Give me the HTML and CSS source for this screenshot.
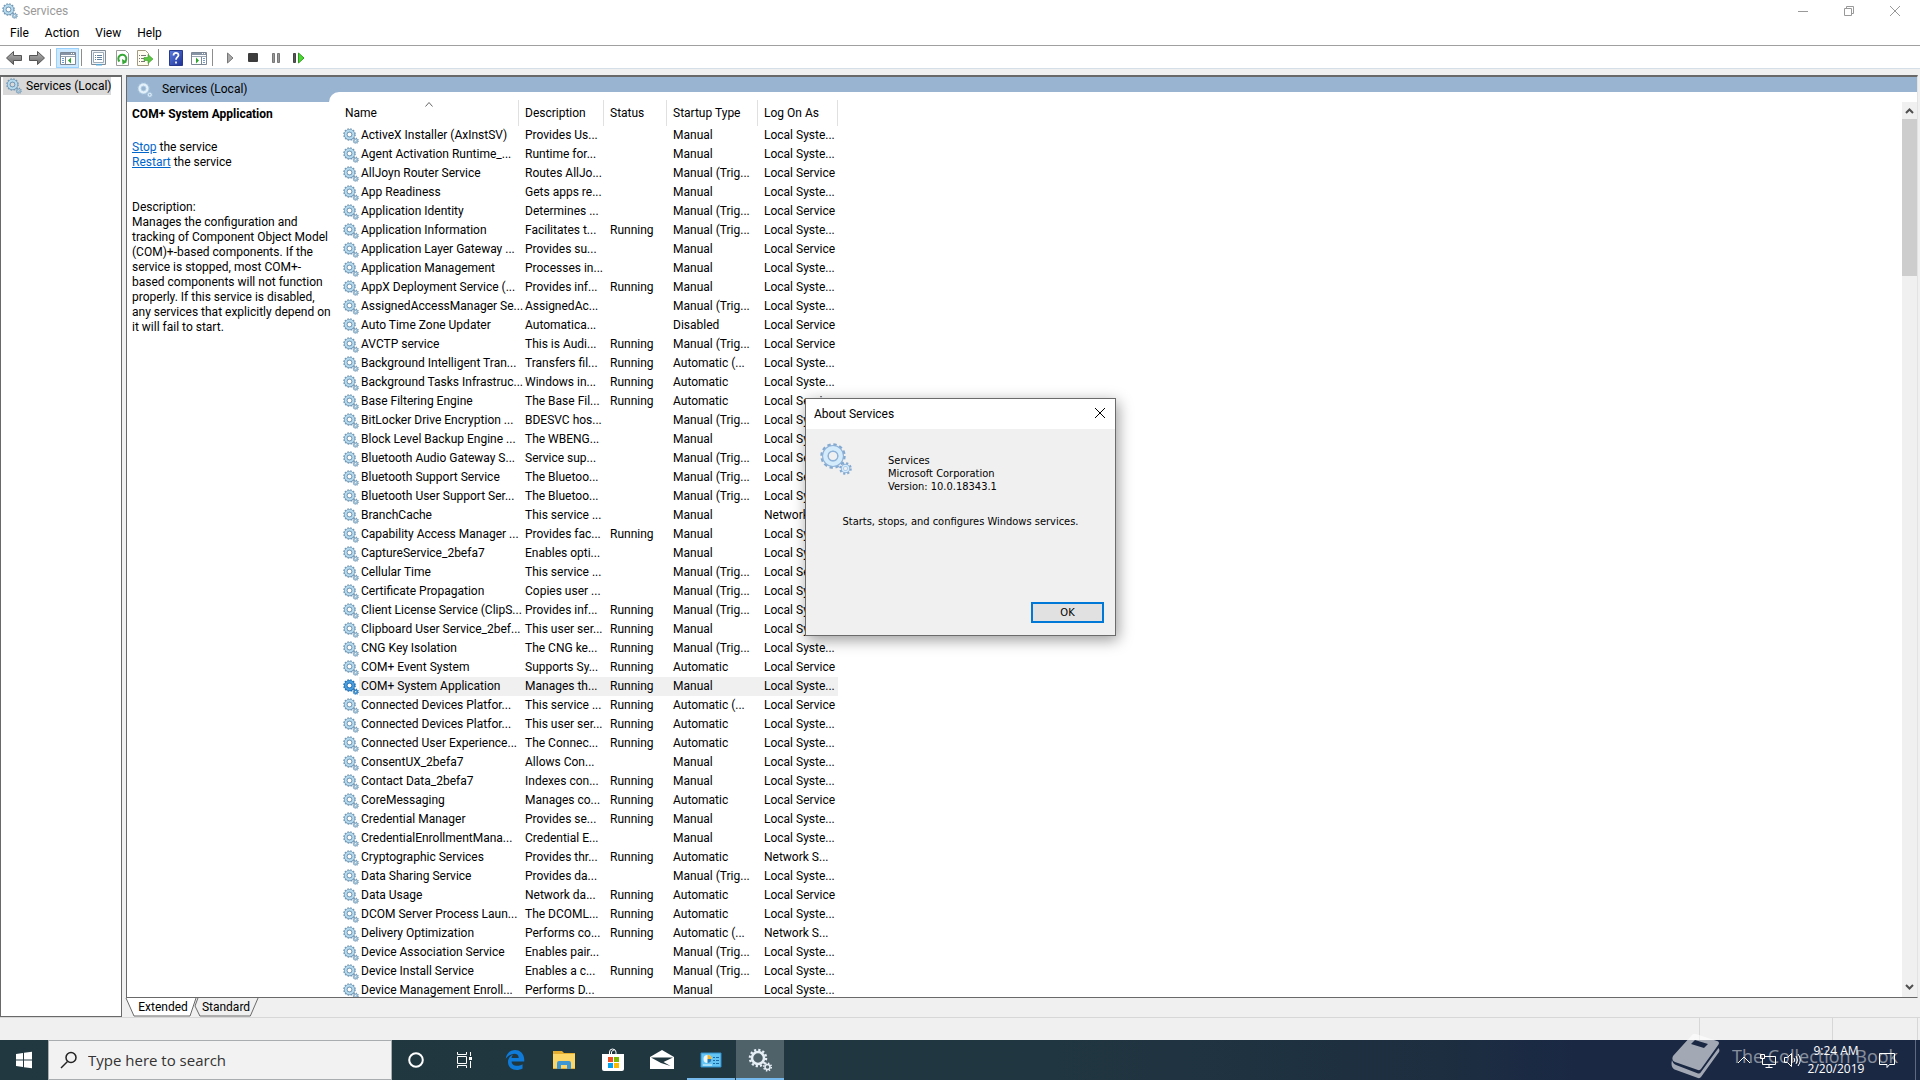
FILE: index.html
```html
<!DOCTYPE html>

<html lang="en">
  <head>
    <meta charset="UTF-8" />
    <meta name="viewport" content="width=device-width,initial-scale=1" />

    <title>Services</title>

    <link rel="stylesheet" href="styles.css">
  </head>

  <body>
    <svg class="sprite" aria-hidden="true">
      <defs>
        <linearGradient id="metal" x1="0" y1="0" x2="0" y2="1">
          <stop offset="0" stop-color="#b4b4b4" />
          <stop offset="1" stop-color="#6a6a6a" />
        </linearGradient>
        <linearGradient id="help-blue" x1="0" y1="0" x2="1" y2="1">
          <stop offset="0" stop-color="#5d7fe0" />
          <stop offset="1" stop-color="#1c2f96" />
        </linearGradient>
      </defs>
      <symbol id="gear" viewBox="0 0 32 32">
        <g fill="none">
          <circle class="gear-teeth" cx="13" cy="13" r="11" stroke-width="3.4" stroke-dasharray="3.2 2.56" />
          <circle class="gear-rim" cx="13" cy="13" r="7.8" stroke-width="6.4" />
          <circle class="gear-body" cx="13" cy="13" r="7.6" stroke-width="4.6" />
          <circle class="gear-edge" cx="13" cy="13" r="4.8" stroke-width="1.4" />
          <circle class="gear-teeth" cx="25.5" cy="25.5" r="5" stroke-width="2.6" stroke-dasharray="2 1.93" />
          <circle class="gear-rim" cx="25.5" cy="25.5" r="3.2" stroke-width="3" />
          <circle class="gear-body" cx="25.5" cy="25.5" r="3" stroke-width="1.6" />
        </g>
      </symbol>
      <symbol id="arrow" viewBox="0 0 16 16">
        <path d="M.5 8 7.500 1.500v4h8v5h-8v4z" fill="url(#metal)" stroke="#555" />
      </symbol>
      <symbol id="window" viewBox="0 0 16 16">
        <path d="M.5 2.500h15v12H.5z" fill="#fff" stroke="#7c8896" />
        <path d="M1 3h14v2H1z" fill="#8794a6" />
        <path d="M1 6.500h14" stroke="#9aa5b3" />
        <path d="M11 3.500h1m1 0h1" stroke="#fff" />
      </symbol>
    </svg>

    <header class="title-bar">
      <svg class="icon gear"><use href="#gear" /></svg>
      <h1>Services</h1>
      <div class="window-controls">
        <button type="button" aria-label="Minimize">
          <svg viewBox="0 0 12 12"><path d="M1 6.500h10" /></svg>
        </button>
        <button type="button" aria-label="Restore">
          <svg viewBox="0 0 12 12"><path d="M1.500 3.500h7v7h-7zM3.500 3.500v-2h7v7h-2" /></svg>
        </button>
        <button type="button" aria-label="Close">
          <svg viewBox="0 0 12 12"><path d="m1 1 10 10M11 1 1 11" /></svg>
        </button>
      </div>
    </header>

    <nav class="menu-bar">
      <button type="button">File</button>
      <button type="button">Action</button>
      <button type="button">View</button>
      <button type="button">Help</button>
    </nav>

    <div class="toolbar">
      <button type="button" aria-label="Back">
        <svg class="icon"><use href="#arrow" /></svg>
      </button>
      <button type="button" aria-label="Forward">
        <svg class="icon flip"><use href="#arrow" /></svg>
      </button>
      <span class="separator"></span>
      <button type="button" class="pressed" aria-label="Show or hide console tree">
        <svg class="icon" viewBox="0 0 16 16">
          <use href="#window" />
          <path d="M5.500 7v7" stroke="#7c8896" />
          <path d="M2 8.500h2m-2 2h2m-2 2h2" stroke="#6f9ccd" />
          <path d="M11 7.500v6l-3-3z" fill="#2fa52f" />
        </svg>
      </button>
      <span class="separator"></span>
      <button type="button" aria-label="Properties">
        <svg class="icon" viewBox="0 0 16 16">
          <path d="M.5.5h14v14H.5z" fill="#eef3f8" stroke="#808b97" />
          <path d="M2.500 2.500h10v10h-10z" fill="#fff" stroke="#9eabb9" />
          <path d="M4 5.500h1m1 0h5m-7 2h1m1 0h5m-7 2h1m1 0h5" stroke="#5f7f9f" />
          <path d="M5 14h6v1.500H5z" fill="#5aa7d6" />
        </svg>
      </button>
      <button type="button" aria-label="Refresh">
        <svg class="icon" viewBox="0 0 16 16">
          <path d="M2.500.5h9l3 3v12h-12z" fill="#fff" stroke="#9a9a9a" />
          <path d="M5.500 11.500a4 4 0 1 1 5 .5" fill="none" stroke="#37a737" stroke-width="2" />
          <path d="m8 9 .5 5.500L13 12z" fill="#37a737" />
        </svg>
      </button>
      <button type="button" aria-label="Export list">
        <svg class="icon" viewBox="0 0 16 16">
          <path d="M.5.5h8l3 3v12H.5z" fill="#fffdf0" stroke="#a29b82" />
          <path d="M2 5.500h1m1 0h5m-7 3h1m1 0h3m-5 3h1m1 0h4" stroke="#777" />
          <path d="M7 7.500h4v-3l5 4.500-5 4.500v-3H7z" fill="#5cc443" stroke="#3b9a2a" stroke-width=".6" />
        </svg>
      </button>
      <span class="separator"></span>
      <button type="button" aria-label="Help">
        <svg class="icon" viewBox="0 0 16 16">
          <path d="M1.500.5h13v15h-13z" fill="url(#help-blue)" stroke="#27398c" />
          <path d="M5.500 5.500c0-3.500 5-3.300 5-.3 0 2-2.500 2-2.500 4.500M8 11.500v2" fill="none" stroke="#fff" stroke-width="1.700" />
        </svg>
      </button>
      <button type="button" aria-label="Show or hide action pane">
        <svg class="icon" viewBox="0 0 16 16">
          <use href="#window" />
          <path d="M10.500 7v7" stroke="#7c8896" />
          <path d="M12 8.500h2m-2 2h2m-2 2h2" stroke="#6f9ccd" />
          <path d="M5 7.500v6l3-3z" fill="#2fa52f" />
        </svg>
      </button>
      <span class="separator"></span>
      <button type="button" aria-label="Start service">
        <svg class="icon" viewBox="0 0 16 16">
          <path d="M5.500 3v10l5.500-5z" fill="#aaa" stroke="#777" />
        </svg>
      </button>
      <button type="button" aria-label="Stop service">
        <svg class="icon" viewBox="0 0 16 16">
          <rect x="3" y="3" width="10" height="9" rx="1" fill="#3c3c3c" />
        </svg>
      </button>
      <button type="button" aria-label="Pause service">
        <svg class="icon" viewBox="0 0 16 16">
          <path d="M4.500 3.500h2v9h-2zM9.500 3.500h2v9h-2z" fill="#999" stroke="#777" />
        </svg>
      </button>
      <button type="button" aria-label="Restart service">
        <svg class="icon" viewBox="0 0 16 16">
          <path d="M2.500 3.500h2v9h-2z" fill="#555" stroke="#444" />
          <path d="M7.500 3v10l5.500-5z" fill="#4fd835" stroke="#2f9d1e" />
        </svg>
      </button>
    </div>

    <main>
      <aside class="tree">
        <a class="tree-item" href="#services">
          <svg class="icon gear"><use href="#gear" /></svg>
          Services (Local)
        </a>
      </aside>

      <div class="content">
        <section id="services" class="view">
          <div class="details">
            <h2 class="details-title">
              <svg class="icon gear light"><use href="#gear" /></svg>
              Services (Local)
            </h2>
            <div class="details-body">
              <h3>COM+ System Application</h3>
              <p class="actions">
                <a href="#stop">Stop</a> the service<br />
                <a href="#restart">Restart</a> the service
              </p>
              <p>
                Description:<br />
                Manages the configuration and<br />
                tracking of Component Object Model<br />
                (COM)+-based components. If the<br />
                service is stopped, most COM+-<br />
                based components will not function<br />
                properly. If this service is disabled,<br />
                any services that explicitly depend on<br />
                it will fail to start.
              </p>
            </div>
          </div>

          <div class="list-area">
            <div class="list">
              <table>
                <colgroup>
                  <col class="col-name" />
                  <col class="col-description" />
                  <col class="col-status" />
                  <col class="col-startup" />
                  <col class="col-logon" />
                </colgroup>
                <thead>
                  <tr>
                    <th class="sorted" scope="col">
                      Name
                      <svg class="sort-mark" viewBox="0 0 8 5"><path d="m.5 4.500 3.500-4 3.500 4" /></svg>
                    </th>
                    <th scope="col">Description</th>
                    <th scope="col">Status</th>
                    <th scope="col">Startup Type</th>
                    <th scope="col">Log On As</th>
                  </tr>
                </thead>
                <tbody id="rows"></tbody>
              </table>
            </div>
            <div class="scrollbar">
              <button type="button" aria-label="Scroll up">
                <svg viewBox="0 0 9 6"><path d="m1 5 3.500-3.500L8 5" /></svg>
              </button>
              <div class="scroll-thumb"></div>
              <button type="button" class="scroll-down" aria-label="Scroll down">
                <svg viewBox="0 0 9 6"><path d="m1 1 3.500 3.500L8 1" /></svg>
              </button>
            </div>
          </div>
        </section>

        <div class="tabs">
          <button type="button" class="tab tab-active">
            <svg viewBox="0 0 70 19" preserveAspectRatio="none"><path d="M0 0 8 18h56L70 0" /></svg>
            <span>Extended</span>
          </button>
          <button type="button" class="tab">
            <svg viewBox="0 0 66 19" preserveAspectRatio="none"><path d="m2 0-3 8 5 10h52l8-18" /></svg>
            <span>Standard</span>
          </button>
        </div>
      </div>
    </main>

    <footer class="status-bar">
      <span class="status-wide"></span>
      <span class="status-cell"></span>
      <span class="status-end"></span>
    </footer>

    <div class="taskbar">
      <button type="button" class="task" aria-label="Start">
        <svg class="task-icon" viewBox="0 0 24 24">
          <path d="m4 6 7-1v6.500H4zM12 4.800 20 3.700v7.800h-8zM4 12.500h7V19l-7-1zM12 12.500h8v7.800l-8-1.100z" fill="#fff" />
        </svg>
      </button>
      <label class="search">
        <svg viewBox="0 0 18 18"><circle cx="11" cy="6.500" r="5" /><path d="M7.500 10.500 1 17" /></svg>
        <input type="text" placeholder="Type here to search" aria-label="Search" />
      </label>
      <button type="button" class="task" aria-label="Cortana">
        <svg class="task-icon" viewBox="0 0 24 24">
          <circle cx="12" cy="12" r="6.800" fill="none" stroke="#fff" stroke-width="2" />
        </svg>
      </button>
      <button type="button" class="task" aria-label="Task View">
        <svg class="task-icon" viewBox="0 0 24 24">
          <g fill="none" stroke="#fff">
            <path d="M5.500 8.500h9v7h-9zM5.500 4v2.500h9V4M5.500 20v-2.500h9V20M18.500 4v4m0 5v7" />
            <path d="M17 10.500h3" stroke-width="3" />
          </g>
        </svg>
      </button>
      <div class="pinned">
        <button type="button" class="task" aria-label="Microsoft Edge">
          <svg class="task-icon" viewBox="0 0 24 24">
            <path d="M2.740 10.810C3.830-1.360 22.500-1.360 21.200 13.560H8.610C8.610 17.850 14.420 19.210 19.540 16.310V20.530C13.250 23.880 5 21.430 5 14.090 5 8.580 9.970 6.810 9.970 6.810S8.580 8.580 8.540 10.050H15.700C15.700 2.930 5.900 5.570 2.740 10.810Z" fill="#0f7ad8" />
          </svg>
        </button>
        <button type="button" class="task" aria-label="File Explorer">
          <svg class="task-icon" viewBox="0 0 24 24">
            <path d="M1 3h9l2 2h11v16H1z" fill="#e6ae31" />
            <path d="M1 6h22v14H1z" fill="#fcd768" />
            <path d="M5 21v-6q0-2 2-2h10q2 0 2 2v6h-4v-4H9v4z" fill="#3e97d3" />
            <path d="M9 17h6v3H9z" fill="#fcd768" />
          </svg>
        </button>
        <button type="button" class="task" aria-label="Microsoft Store">
          <svg class="task-icon" viewBox="0 0 24 24">
            <path d="M8.500 6V4q0-3 3-3t3.500 3v2M10.500 6V4q1-2.500 3-2" fill="none" stroke="#fff" />
            <path d="M1 6h22v15q0 2-2 2H3q-2 0-2-2z" fill="#fff" />
            <path d="M7 9h5v5H7z" fill="#f04e23" />
            <path d="M13 9h5v5h-5z" fill="#7db700" />
            <path d="M7 15h5v5H7z" fill="#00a1ed" />
            <path d="M13 15h5v5h-5z" fill="#fdb800" />
          </svg>
        </button>
        <button type="button" class="task" aria-label="Mail">
          <svg class="task-icon" viewBox="0 0 24 24">
            <path d="M0 9 12 2l12 7v12H0z" fill="#fff" />
            <path d="M1 9.500h22L13.500 14l7 4-9.500-3z" fill="#213840" />
          </svg>
        </button>
        <button type="button" class="task open" aria-label="Control Panel">
          <svg class="task-icon" viewBox="0 0 24 24">
            <path d="M2 5h20v14H2z" fill="#64c5f5" stroke="#318fc9" />
            <circle cx="8.500" cy="11" r="4" fill="#e9f7ff" />
            <path d="M8.500 11V7a4 4 0 0 1 4 4z" fill="#f3b52b" />
            <path d="M8.500 11h4a4 4 0 0 1-4 4z" fill="#257bb8" />
            <path d="M14 9.500h2m1 0h3M14 12.500h2m1 0h3M14 15.500h2m1 0h3" stroke="#1a6aa8" />
            <path d="M4 17h9" stroke="#e9f7ff" />
          </svg>
        </button>
        <button type="button" class="task open current" aria-label="Services">
          <svg class="task-icon" viewBox="0 0 24 24">
            <g fill="none" stroke="#e6eff6">
              <circle cx="10" cy="10" r="6" stroke-width="2.500" />
              <circle cx="10" cy="10" r="8" stroke-width="2.500" stroke-dasharray="2.200 1.990" />
              <circle cx="19.500" cy="19" r="2.500" stroke-width="1.500" />
              <circle cx="19.500" cy="19" r="3.800" stroke-width="1.500" stroke-dasharray="1.500 1.485" />
            </g>
          </svg>
        </button>
      </div>

      <div class="tray">
        <button type="button" aria-label="Show hidden icons">
          <svg viewBox="0 0 18 18"><path d="m3 12 6-6 6 6" /></svg>
        </button>
        <button type="button" aria-label="Network">
          <svg viewBox="0 0 18 18"><path d="M6 5.500h10.500v8H3.500V8M1.500 3.500h4v4h-4zM10 13.500v3M6.500 16.500h7" /></svg>
        </button>
        <button type="button" aria-label="Volume">
          <svg viewBox="0 0 18 18"><path d="M1.500 6.500h3l4-4v13l-4-4h-3zM11 7q1.500 2 0 4M13 5q3 4 0 8M15 3q4.500 6 0 12" /></svg>
        </button>
        <time class="clock" datetime="2019-02-20T09:24">
          <span>9:24 AM</span>
          <span>2/20/2019</span>
        </time>
        <button type="button" class="notifications" aria-label="Notifications">
          <svg viewBox="0 0 18 18"><path d="M1.500 2.500h15v11h-5L9 16.500v-3H1.500z" /></svg>
        </button>
        <span class="show-desktop"></span>
      </div>
    </div>

    <div class="watermark">
      <svg viewBox="0 0 50 46">
        <path fill-rule="evenodd" d="M22 2q1.500-2 4-1l21 7q3 1 1.500 3.500L31 36q-1 1.500-3 1L5 29q-4-2-2-6zM25 7l-4 4 13 4 4-4z" />
        <path d="M2 27q-2 8 4 10l22 8q2 .5 3-1l18-25q1-2-.5-4L31 39q-1 2-3 1.500L6 32q-3-1-4-5z" />
      </svg>
      <span>The Collection Book</span>
    </div>

    <dialog class="about" open aria-labelledby="about-title">
      <div class="about-title-bar">
        <h2 id="about-title">About Services</h2>
        <button type="button" aria-label="Close">
          <svg viewBox="0 0 12 12"><path d="m1 1 10 10M11 1 1 11" /></svg>
        </button>
      </div>
      <div class="about-info">
        <svg class="about-icon gear"><use href="#gear" /></svg>
        <p>
          Services<br />
          Microsoft Corporation<br />
          Version: 10.0.18343.1
        </p>
      </div>
      <p class="about-text">Starts, stops, and configures Windows services.</p>
      <div class="about-actions">
        <button type="button">OK</button>
      </div>
    </dialog>

    <script src="services.js"></script>
  </body>
</html>
```

FILE: services.js
```js
const sys = "Local Syste...";
const local = "Local Service";
const network = "Network S...";
const trig = "Manual (Trig...";
const delayed = "Automatic (...";
const selected = "COM+ System Application";

// name, description, running, startup type, log on as
const services = [
  ["ActiveX Installer (AxInstSV)", "Provides Us...", 0, "Manual", sys],
  ["Agent Activation Runtime_...", "Runtime for...", 0, "Manual", sys],
  ["AllJoyn Router Service", "Routes AllJo...", 0, trig, local],
  ["App Readiness", "Gets apps re...", 0, "Manual", sys],
  ["Application Identity", "Determines ...", 0, trig, local],
  ["Application Information", "Facilitates t...", 1, trig, sys],
  ["Application Layer Gateway ...", "Provides su...", 0, "Manual", local],
  ["Application Management", "Processes in...", 0, "Manual", sys],
  ["AppX Deployment Service (...", "Provides inf...", 1, "Manual", sys],
  ["AssignedAccessManager Se...", "AssignedAc...", 0, trig, sys],
  ["Auto Time Zone Updater", "Automatica...", 0, "Disabled", local],
  ["AVCTP service", "This is Audi...", 1, trig, local],
  ["Background Intelligent Tran...", "Transfers fil...", 1, delayed, sys],
  ["Background Tasks Infrastruc...", "Windows in...", 1, "Automatic", sys],
  ["Base Filtering Engine", "The Base Fil...", 1, "Automatic", local],
  ["BitLocker Drive Encryption ...", "BDESVC hos...", 0, trig, sys],
  ["Block Level Backup Engine ...", "The WBENG...", 0, "Manual", sys],
  ["Bluetooth Audio Gateway S...", "Service sup...", 0, trig, local],
  ["Bluetooth Support Service", "The Bluetoo...", 0, trig, local],
  ["Bluetooth User Support Ser...", "The Bluetoo...", 0, trig, sys],
  ["BranchCache", "This service ...", 0, "Manual", network],
  ["Capability Access Manager ...", "Provides fac...", 1, "Manual", sys],
  ["CaptureService_2befa7", "Enables opti...", 0, "Manual", sys],
  ["Cellular Time", "This service ...", 0, trig, local],
  ["Certificate Propagation", "Copies user ...", 0, trig, sys],
  ["Client License Service (ClipS...", "Provides inf...", 1, trig, sys],
  ["Clipboard User Service_2bef...", "This user ser...", 1, "Manual", sys],
  ["CNG Key Isolation", "The CNG ke...", 1, trig, sys],
  ["COM+ Event System", "Supports Sy...", 1, "Automatic", local],
  ["COM+ System Application", "Manages th...", 1, "Manual", sys],
  ["Connected Devices Platfor...", "This service ...", 1, delayed, local],
  ["Connected Devices Platfor...", "This user ser...", 1, "Automatic", sys],
  ["Connected User Experience...", "The Connec...", 1, "Automatic", sys],
  ["ConsentUX_2befa7", "Allows Con...", 0, "Manual", sys],
  ["Contact Data_2befa7", "Indexes con...", 1, "Manual", sys],
  ["CoreMessaging", "Manages co...", 1, "Automatic", local],
  ["Credential Manager", "Provides se...", 1, "Manual", sys],
  ["CredentialEnrollmentMana...", "Credential E...", 0, "Manual", sys],
  ["Cryptographic Services", "Provides thr...", 1, "Automatic", network],
  ["Data Sharing Service", "Provides da...", 0, trig, sys],
  ["Data Usage", "Network da...", 1, "Automatic", local],
  ["DCOM Server Process Laun...", "The DCOML...", 1, "Automatic", sys],
  ["Delivery Optimization", "Performs co...", 1, delayed, network],
  ["Device Association Service", "Enables pair...", 0, trig, sys],
  ["Device Install Service", "Enables a c...", 1, trig, sys],
  ["Device Management Enroll...", "Performs D...", 0, "Manual", sys],
];

const rows = document.getElementById("rows");
rows.innerHTML = services
  .map(
    ([name, description, running, startup, logon]) => `
      <tr class="${name === selected ? "selected" : ""}">
        <td><div class="name"><svg class="icon gear"><use href="#gear" /></svg>${name}</div></td>
        <td>${description}</td>
        <td>${running ? "Running" : ""}</td>
        <td>${startup}</td>
        <td>${logon}</td>
      </tr>`
  )
  .join("");
```

FILE: styles.css
```css
:root {
  --color-face: #f0f0f0;
  --color-line: #a0a0a0;
  --color-dark: #696969;
  --color-header: #99b4d1;
  --color-link: #0066cc;
  --font-family: Roboto, "Open Sans", sans-serif;
  --font-search: "Open Sans", "Noto Sans", sans-serif;
  --font-dialog: "DejaVu Sans Condensed", "DejaVu Sans", sans-serif;
}

* {
  box-sizing: border-box;
  margin: 0;
  padding: 0;
}

body {
  background-color: var(--color-face);
  color: #000;
  display: flex;
  flex-direction: column;
  font-family: var(--font-family);
  font-size: 12px;
  height: 100vh;
  line-height: 15px;
  overflow: hidden;
}

h1,
h2 {
  font-size: 12px;
  font-weight: normal;
}

h3 {
  font-size: 12px;
}

button {
  background-color: transparent;
  border-style: none;
  color: inherit;
  font-family: inherit;
  font-size: inherit;
  line-height: inherit;
}

.sprite {
  height: 0;
  position: absolute;
  width: 0;
}

.icon {
  display: block;
  flex-shrink: 0;
  height: 16px;
  width: 16px;
}

.flip {
  transform: scaleX(-1);
}

/* gears */
.gear {
  --teeth: #7a9ebb;
  --rim: #6b8fac;
  --body: #b5daee;
}

.light {
  --teeth: #a5c3dc;
  --rim: #b4cfe4;
  --body: #e4f1fa;
}

.gear-teeth {
  stroke: var(--teeth);
}

.gear-rim {
  stroke: var(--rim);
}

.gear-body {
  stroke: var(--body);
}

.gear-edge {
  stroke: var(--rim);
}

/* window frame */
.title-bar {
  align-items: center;
  background-color: #fff;
  color: #999;
  display: flex;
  flex-shrink: 0;
  gap: 5px;
  height: 22px;
  padding-left: 2px;
}

.window-controls {
  display: flex;
  margin-left: auto;
  padding-right: 2px;
}

.window-controls button {
  align-items: center;
  display: flex;
  height: 20px;
  justify-content: center;
  width: 46px;
}

.window-controls svg {
  fill: none;
  height: 12px;
  stroke: #999;
  width: 12px;
}

.menu-bar {
  background-color: #fff;
  border-bottom: 1px solid var(--color-line);
  display: flex;
  flex-shrink: 0;
  gap: 2px;
  height: 24px;
  padding: 0 0 1px 3px;
}

.menu-bar button {
  padding: 0 7px;
}

.toolbar {
  align-items: center;
  background-color: #fff;
  border-bottom: 1px solid #d5dfe8;
  display: flex;
  flex-shrink: 0;
  height: 23px;
  padding: 1px 0 0 2px;
}

.toolbar button {
  align-items: center;
  display: flex;
  height: 20px;
  justify-content: center;
  width: 23px;
}

.toolbar .pressed {
  background-color: #cce8ff;
  border: 1px solid #99d1ff;
}

.separator {
  background-color: #8d8d8d;
  height: 17px;
  margin: 0 5px 0 2px;
  width: 1px;
}

/* panes */
main {
  display: flex;
  flex: 1;
  gap: 4px;
  min-height: 0;
  padding: 6px 2px 0 0;
}

.tree {
  background-color: #fff;
  border: 1px solid var(--color-dark);
  border-top-width: 2px;
  padding: 0 2px;
  width: 122px;
}

.tree-item {
  align-items: center;
  background-color: #d9d9d9;
  color: #000;
  display: flex;
  gap: 4px;
  height: 18px;
  padding-left: 3px;
  text-decoration: none;
  white-space: nowrap;
  width: 108px;
}

.content {
  display: flex;
  flex: 1;
  flex-direction: column;
  min-width: 0;
}

.view {
  background-color: #fff;
  border: 1px solid var(--color-dark);
  border-right-color: #e3e3e3;
  border-top-width: 2px;
  display: flex;
  flex: 1;
  min-height: 0;
}

.details {
  position: relative;
  width: 202px;
  z-index: 1;
}

.details-title {
  align-items: center;
  background-color: var(--color-header);
  display: flex;
  gap: 9px;
  height: 25px;
  padding-left: 10px;
}

.details-body {
  padding: 5px 0 0 5px;
  white-space: nowrap;
}

.actions {
  padding: 18px 0 30px;
}

.actions a {
  color: var(--color-link);
}

.list-area {
  background: linear-gradient(var(--color-header), var(--color-header)) top / 100% 25px no-repeat;
  display: flex;
  flex: 1;
  min-height: 0;
  min-width: 0;
  position: relative;
}

.list-area::before {
  background-color: #fff;
  border-top-left-radius: 10px;
  content: "";
  inset: 15px 0 0;
  position: absolute;
}

.list {
  flex: 1;
  overflow: hidden;
  padding: 23px 0 0 10px;
  position: relative;
}

table {
  border-collapse: collapse;
  table-layout: fixed;
  width: 499px;
}

.col-name {
  width: 180px;
}

.col-description {
  width: 85px;
}

.col-status {
  width: 63px;
}

.col-startup {
  width: 91px;
}

.col-logon {
  width: 80px;
}

th {
  background: linear-gradient(#e0e0e0, #e0e0e0) right / 1px 100% no-repeat;
  font-weight: normal;
  height: 26px;
  padding: 0 0 0 6px;
  position: relative;
  text-align: left;
}

td {
  height: 19px;
  padding: 0 0 0 6px;
  white-space: nowrap;
}

td:first-child {
  padding-left: 4px;
}

.name {
  align-items: center;
  display: flex;
  gap: 2px;
}

.sort-mark {
  fill: none;
  height: 5px;
  left: 86px;
  position: absolute;
  stroke: #666;
  top: 2px;
  width: 8px;
}

.selected td {
  background-color: var(--color-face);
}

.selected td:first-child {
  background: linear-gradient(90deg, #fff 20px, var(--color-face) 20px);
}

.selected .gear {
  --teeth: #2a78b8;
  --rim: #1f6cb0;
  --body: #4a9edb;
}

.scrollbar {
  background-color: var(--color-face);
  display: flex;
  flex-direction: column;
  margin-top: 25px;
  padding-bottom: 2px;
  position: relative;
  width: 15px;
}

.scrollbar button {
  height: 17px;
}

.scrollbar svg {
  fill: none;
  height: 6px;
  stroke: #505050;
  stroke-width: 2;
  width: 9px;
}

.scroll-thumb {
  background-color: #cdcdcd;
  height: 157px;
}

.scrollbar .scroll-down {
  margin-top: auto;
}

/* view tabs */
.tabs {
  display: flex;
  height: 19px;
}

.tab {
  height: 19px;
  padding: 0 8px 0 4px;
  position: relative;
  width: 64px;
}

.tab-active {
  padding: 0 4px 0 8px;
  width: 70px;
  z-index: 1;
}

.tab svg {
  fill: var(--color-face);
  height: 19px;
  inset: 0;
  overflow: visible;
  position: absolute;
  stroke: var(--color-dark);
  width: 100%;
}

.tab-active svg {
  fill: #fff;
}

.tab span {
  position: relative;
}

.status-bar {
  border-top: 1px solid #d7d7d7;
  display: flex;
  flex-shrink: 0;
  height: 23px;
}

.status-wide {
  border-right: 1px solid #d7d7d7;
  flex: 1;
}

.status-cell {
  border-right: 1px solid #d7d7d7;
  width: 133px;
}

.status-end {
  border-right: 1px solid #d7d7d7;
  margin-right: 2px;
  width: 85px;
}

/* taskbar */
.taskbar {
  background: linear-gradient(90deg, #213840, #203640 55%, #1d2e40 75%, #1a2844 82%);
  color: #fff;
  display: flex;
  flex-shrink: 0;
  height: 40px;
}

.task {
  align-items: center;
  display: flex;
  height: 40px;
  justify-content: center;
  width: 48px;
}

.task-icon {
  height: 24px;
  width: 24px;
}

.search {
  align-items: center;
  background-color: #f2f2f2;
  border: 1px solid #a9adaf;
  display: flex;
  gap: 10px;
  padding-left: 11px;
  width: 344px;
}

.search svg {
  fill: none;
  height: 18px;
  stroke: #222;
  stroke-width: 1.5;
  width: 18px;
}

.search input {
  background-color: transparent;
  border-style: none;
  flex: 1;
  font-family: var(--font-search);
  font-size: 15px;
}

.search input::placeholder {
  color: #333;
}

.pinned {
  display: flex;
  gap: 1px;
  padding-left: 3px;
}

.open {
  border-bottom: 2px solid #76b9ed;
  padding-top: 2px;
}

.current {
  background-color: #4f626a;
}

.tray {
  align-items: center;
  display: flex;
  margin-left: auto;
}

.tray button {
  align-items: center;
  display: flex;
  height: 40px;
  justify-content: center;
  width: 24px;
}

.tray svg {
  fill: none;
  height: 18px;
  stroke: #fff;
  width: 18px;
}

.clock {
  display: flex;
  flex-direction: column;
  font-family: var(--font-search);
  line-height: 18px;
  text-align: center;
  width: 64px;
}

.tray .notifications {
  width: 38px;
}

.show-desktop {
  border-left: 1px solid #5d6980;
  height: 40px;
  margin-left: 9px;
  width: 5px;
}

.watermark {
  align-items: center;
  bottom: 0;
  color: #fff;
  display: flex;
  font-family: var(--font-search);
  font-size: 18px;
  gap: 12px;
  height: 48px;
  opacity: 0.6;
  pointer-events: none;
  position: absolute;
  right: 22px;
}

.watermark svg {
  fill: #fff;
  height: 46px;
  width: 50px;
}

.watermark span {
  opacity: 0.8;
}

/* about box */
.about {
  background-color: var(--color-face);
  border: 1px solid #6b6b6b;
  box-shadow: 2px 4px 14px rgb(0 0 0 / 0.4);
  color: #000;
  display: flex;
  flex-direction: column;
  font-family: var(--font-dialog);
  font-size: 11px;
  height: 238px;
  left: 805px;
  line-height: 13px;
  position: absolute;
  top: 398px;
  width: 311px;
}

.about-title-bar {
  align-items: center;
  background-color: #fff;
  display: flex;
  font-family: var(--font-family);
  height: 30px;
  justify-content: space-between;
  padding-left: 8px;
}

.about-title-bar button {
  height: 30px;
  width: 30px;
}

.about-title-bar svg {
  fill: none;
  height: 12px;
  stroke: #000;
  width: 12px;
}

.about-info {
  display: flex;
  gap: 36px;
  padding: 14px 14px 0;
}

.about-info p {
  padding-top: 11px;
}

.about-icon {
  --teeth: #84a9d0;
  --rim: #8fb2d8;
  --body: #d3ebfb;
  height: 32px;
  width: 32px;
}

.about-text {
  padding-top: 22px;
  text-align: center;
}

.about-actions {
  display: flex;
  justify-content: flex-end;
  margin-top: auto;
  padding: 0 11px 12px;
}

.about-actions button {
  background-color: #e1e1e1;
  border: 2px solid #0078d7;
  height: 21px;
  width: 73px;
}
```
